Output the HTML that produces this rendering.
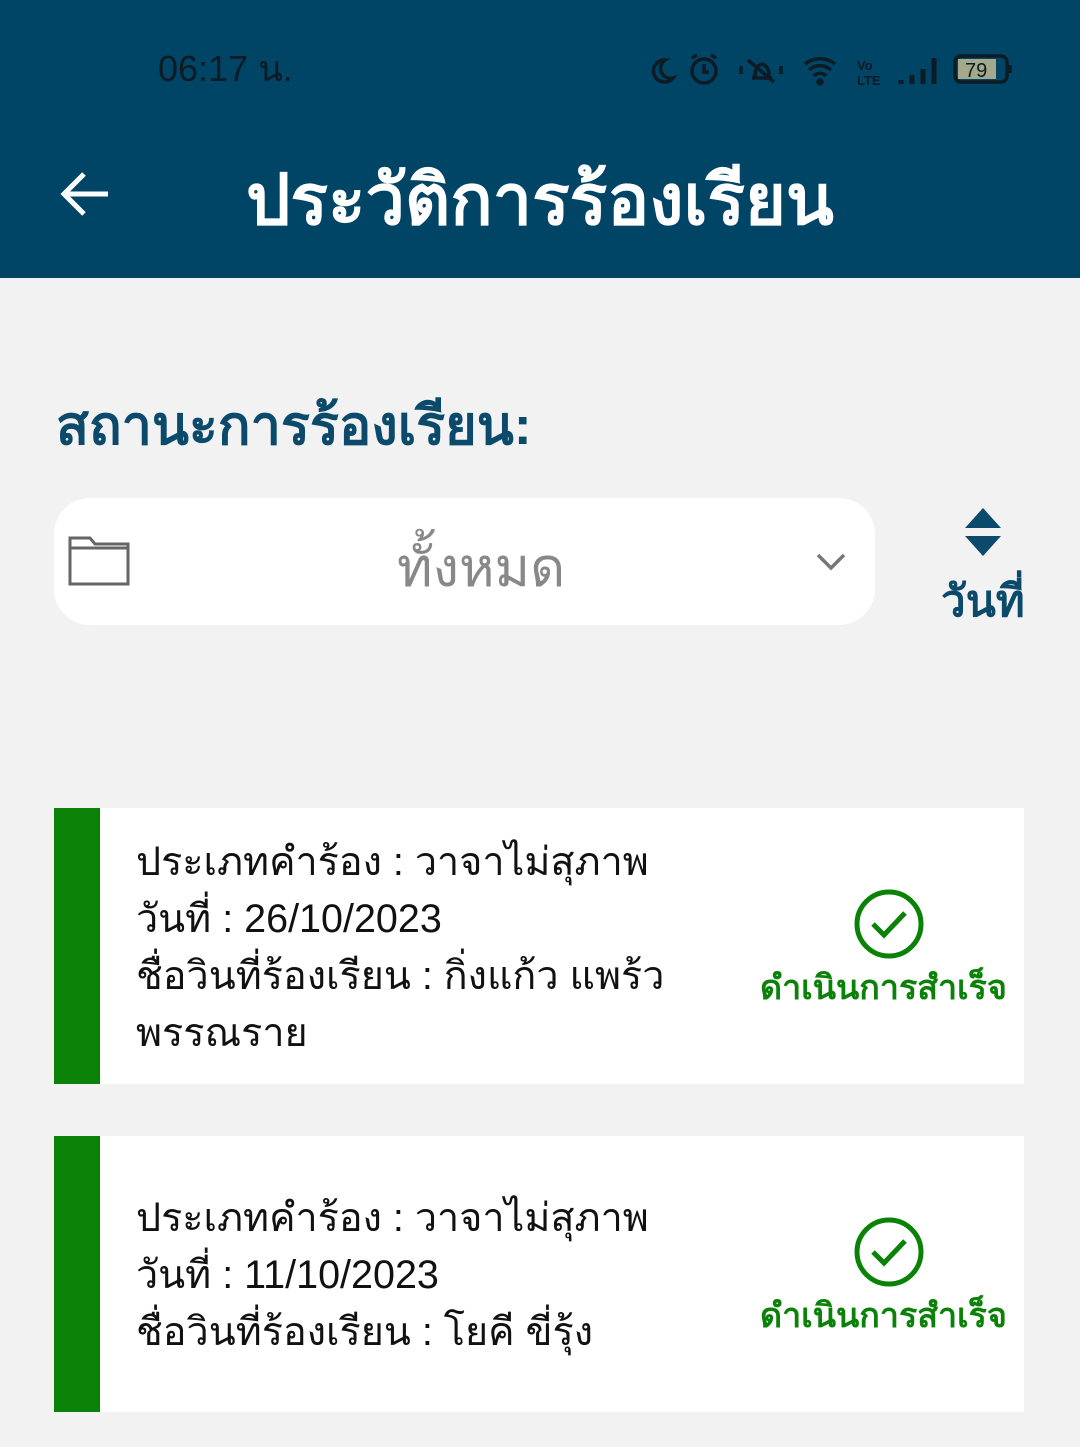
<!DOCTYPE html>
<html><head><meta charset="utf-8">
<style>
*{margin:0;padding:0;box-sizing:border-box}
body{width:1080px;height:1447px;background:#f2f2f2;font-family:"Liberation Sans",sans-serif;position:relative;overflow:hidden}
.hdr{position:absolute;left:0;top:0;width:1080px;height:278px;background:#004466}
.time{position:absolute;left:158px;top:40px;font-size:36px;color:#0d1b24}
.title{position:absolute;left:246px;top:144px;font-size:70px;font-weight:bold;color:#fff;white-space:nowrap}
.lbl{position:absolute;left:56px;top:382px;font-size:54px;font-weight:bold;color:#0b4a6b;white-space:nowrap}
.sel{position:absolute;left:54px;top:498px;width:821px;height:127px;background:#fff;border-radius:36px}
.sel .t{position:absolute;left:343px;top:26px;font-size:54px;color:#888;white-space:nowrap}
.sort{position:absolute;left:941px;top:566px;font-size:44px;font-weight:bold;color:#0b4a6b;white-space:nowrap}
.card{position:absolute;left:54px;width:970px;height:276px;background:#fff;border-left:46px solid #0a8208}
.card .txt{position:absolute;left:36px;font-size:39.5px;line-height:57px;color:#111;white-space:nowrap}
.card .st{position:absolute;left:660px;font-size:34px;font-weight:bold;color:#0a8208;white-space:nowrap}
.card svg.ok{position:absolute;left:753px}
</style></head><body>
<div class="hdr">
<div class="time">06:17 น.</div>
<svg style="position:absolute;left:645px;top:52px" width="370" height="36" viewBox="0 0 370 36" fill="none" stroke="#0d1b24" stroke-width="3.5">
<path d="M20 8a11 11 0 1 0 8 18a10 10 0 0 1-8-18z"/>
<circle cx="59" cy="19" r="12"/><path d="M59 12v8h5M47 6l5-3M71 6l-5-3"/>
<path d="M107 26h20M110 26c0-6 0-12 7-14c7 2 7 8 7 14M103 8l26 22M96 14v8M136 14v8"/>
<path d="M160 12a24 24 0 0 1 30 0M164 18a16 16 0 0 1 22 0M169 24a8 8 0 0 1 12 0"/><circle cx="175" cy="30" r="2" fill="#0d1b24"/>
<text x="212" y="18" font-size="13" font-weight="bold" fill="#0d1b24" stroke="none">Vo</text><text x="212" y="33" font-size="13" font-weight="bold" fill="#0d1b24" stroke="none">LTE</text>
<path stroke-width="5" d="M256 32v-4M267 32v-9M278 32v-15M289 32v-26"/>
<rect x="310" y="4" width="52" height="26" rx="6"/><rect x="313" y="7" width="38" height="20" fill="#a3a98a" stroke="none"/><path d="M365 13v8"/>
<text x="320" y="25" font-size="20" fill="#0d1b24" stroke="none">79</text>
</svg>
<svg style="position:absolute;left:60px;top:170px" width="50" height="48" viewBox="0 0 50 48" fill="none" stroke="#fff" stroke-width="5"><path d="M48 24H5M24 4L4 24l20 20"/></svg>
<div class="title">ประวัติการร้องเรียน</div>
</div>
<div class="lbl">สถานะการร้องเรียน:</div>
<div class="sel">
<svg style="position:absolute;left:14px;top:36px" width="62" height="52" viewBox="0 0 62 52" fill="none" stroke="#666" stroke-width="3"><path d="M2 4h20l5 6h33v40H2z M2 14h58"/></svg>
<div class="t">ทั้งหมด</div>
<svg style="position:absolute;left:762px;top:54px" width="30" height="20" viewBox="0 0 30 20" fill="none" stroke="#777" stroke-width="3.5"><path d="M2 3l13 13L28 3"/></svg>
</div>
<svg style="position:absolute;left:964px;top:508px" width="38" height="48" viewBox="0 0 38 48"><path d="M19 0L37 20H1z M19 48L37 28H1z" fill="#0b4a6b"/></svg>
<div class="sort">วันที่</div>

<div class="card" style="top:808px">
<div class="txt" style="top:26px">ประเภทคำร้อง : วาจาไม่สุภาพ<br>วันที่ : 26/10/2023<br>ชื่อวินที่ร้องเรียน : กิ่งแก้ว แพร้ว<br>พรรณราย</div>
<svg class="ok" style="top:80px" width="72" height="72" viewBox="0 0 72 72" fill="none" stroke="#0a8208" stroke-width="5"><circle cx="36" cy="36" r="32"/><path d="M20 36l11 11 21-22"/></svg>
<div class="st" style="top:152px">ดำเนินการสำเร็จ</div>
</div>
<div class="card" style="top:1136px">
<div class="txt" style="top:54px">ประเภทคำร้อง : วาจาไม่สุภาพ<br>วันที่ : 11/10/2023<br>ชื่อวินที่ร้องเรียน : โยคี ขี่รุ้ง</div>
<svg class="ok" style="top:80px" width="72" height="72" viewBox="0 0 72 72" fill="none" stroke="#0a8208" stroke-width="5"><circle cx="36" cy="36" r="32"/><path d="M20 36l11 11 21-22"/></svg>
<div class="st" style="top:152px">ดำเนินการสำเร็จ</div>
</div>
</body></html>
